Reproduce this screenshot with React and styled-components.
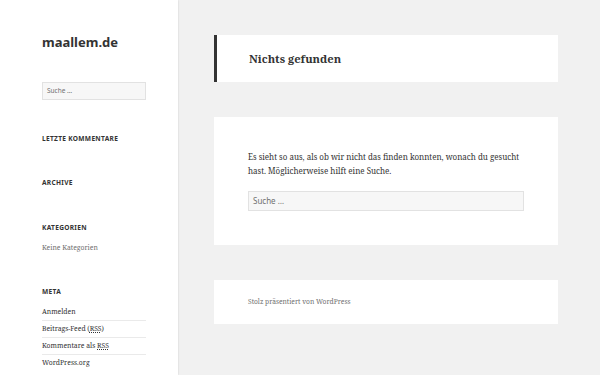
import React from "react";
import styled, { createGlobalStyle } from "styled-components";

const GlobalStyle = createGlobalStyle`
  html, body {
    margin: 0;
    padding: 0;
    background: #f1f1f1;
  }
  body {
    font-family: "Noto Serif", "DejaVu Serif", serif;
    color: #333;
  }
`;

const Page = styled.div`
  display: flex;
  width: 600px;
  height: 375px;
  overflow: hidden;
  background: #f1f1f1;
`;

const Sidebar = styled.aside`
  width: 178px;
  flex: none;
  box-sizing: border-box;
  padding: 33px 32px 0 42px;
  background: #fff;
  box-shadow: 0 0 2px rgba(0, 0, 0, 0.15);
`;

const SiteTitle = styled.div`
  font-family: "Noto Sans", sans-serif;
  font-weight: 700;
  font-size: 13px;
  line-height: 18px;
  color: #333;
`;

const SearchField = styled.div`
  box-sizing: border-box;
  height: ${(p) => (p.big ? 20 : 18)}px;
  margin-top: ${(p) => p.top || 0}px;
  padding: 0 ${(p) => (p.big ? 4 : 4)}px;
  background: #f7f7f7;
  border: 1px solid rgba(51, 51, 51, 0.1);
  font-family: "Noto Sans", sans-serif;
  font-size: ${(p) => (p.big ? 8 : 6.5)}px;
  line-height: ${(p) => (p.big ? 18 : 16)}px;
  color: #707070;
`;

const Widget = styled.section`
  margin-top: ${(p) => p.top}px;
`;

const WidgetTitle = styled.h2`
  margin: 0;
  font-family: "Noto Sans", sans-serif;
  font-weight: 700;
  font-size: 6.6px;
  line-height: 10px;
  letter-spacing: 0.045em;
  text-transform: uppercase;
  color: #333;
`;

const List = styled.ul`
  list-style: none;
  margin: 7px 0 0;
  padding: 0;
`;

const Item = styled.li`
  font-size: 6.8px;
  line-height: 14px;
  padding: 1px 0;
  color: ${(p) => (p.muted ? "#707070" : "#333")};
  border-bottom: ${(p) => (p.line ? "1px solid #eaeaea" : "none")};

  abbr {
    text-decoration: underline dotted;
  }
`;

const Main = styled.main`
  flex: 1;
  display: flex;
  flex-direction: column;
  gap: 35px;
  padding: 35px 42px 0 36px;
`;

const Card = styled.div`
  background: #fff;
  box-sizing: border-box;
  width: 344px;
  padding: ${(p) => p.pad || "0 34px"};
  border-left: ${(p) => (p.accent ? "3px solid #333" : "none")};
`;

const Heading = styled.h1`
  margin: 0;
  font-weight: 700;
  font-size: 11.2px;
  line-height: 47px;
  color: #333;
`;

const Text = styled.p`
  margin: 0;
  font-size: 8px;
  line-height: 14px;
  color: #333;
`;

const Credit = styled.div`
  font-size: 6.7px;
  line-height: 44px;
  color: #707070;
`;

export default function App() {
  return (
    <Page>
      <GlobalStyle />
      <Sidebar>
        <SiteTitle>maallem.de</SiteTitle>
        <SearchField top={31}>Suche …</SearchField>

        <Widget top={34}>
          <WidgetTitle>Letzte Kommentare</WidgetTitle>
        </Widget>
        <Widget top={34}>
          <WidgetTitle>Archive</WidgetTitle>
        </Widget>
        <Widget top={35}>
          <WidgetTitle>Kategorien</WidgetTitle>
          <List>
            <Item muted>Keine Kategorien</Item>
          </List>
        </Widget>
        <Widget top={31}>
          <WidgetTitle>Meta</WidgetTitle>
          <List>
            <Item line>Anmelden</Item>
            <Item line>
              Beitrags-Feed (<abbr>RSS</abbr>)
            </Item>
            <Item line>
              Kommentare als <abbr>RSS</abbr>
            </Item>
            <Item>WordPress.org</Item>
          </List>
        </Widget>
      </Sidebar>

      <Main>
        <Card accent pad="0 32px">
          <Heading>Nichts gefunden</Heading>
        </Card>
        <Card pad="33px 34px 34px">
          <Text>
            Es sieht so aus, als ob wir nicht das finden konnten, wonach du
            gesucht hast. Möglicherweise hilft eine Suche.
          </Text>
          <SearchField big top={13}>
            Suche …
          </SearchField>
        </Card>
        <Card>
          <Credit>Stolz präsentiert von WordPress</Credit>
        </Card>
      </Main>
    </Page>
  );
}
